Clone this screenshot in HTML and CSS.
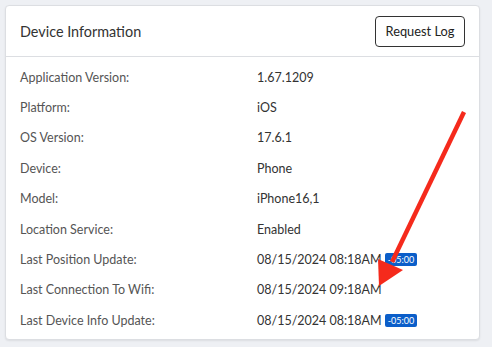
FILE: index.html
```html
<!DOCTYPE html>
<html lang="en">
  <head>
    <meta charset="UTF-8">
    <title>Device Information</title>
    <link rel="stylesheet" href="styles.css">
  </head>
  <body>
    <section class="panel">
      <header class="panel-head">
        <h2>Device Information</h2>
        <button class="btn">Request Log</button>
      </header>
      <div class="panel-body">
        <div class="row"><span class="label">Application Version:</span><span class="value">1.67.1209</span></div>
        <div class="row"><span class="label">Platform:</span><span class="value">iOS</span></div>
        <div class="row"><span class="label">OS Version:</span><span class="value">17.6.1</span></div>
        <div class="row"><span class="label">Device:</span><span class="value">Phone</span></div>
        <div class="row"><span class="label">Model:</span><span class="value">iPhone16,1</span></div>
        <div class="row"><span class="label">Location Service:</span><span class="value">Enabled</span></div>
        <div class="row"><span class="label">Last Position Update:</span><span class="value">08/15/2024 08:18AM <span class="tz">-05:00</span></span></div>
        <div class="row"><span class="label">Last Connection To Wifi:</span><span class="value">08/15/2024 09:18AM</span></div>
        <div class="row"><span class="label">Last Device Info Update:</span><span class="value">08/15/2024 08:18AM <span class="tz">-05:00</span></span></div>
      </div>
    </section>
    <!-- annotation arrow drawn over the screenshot -->
    <svg class="arrow" width="492" height="347" viewBox="0 0 492 347">
      <line x1="464" y1="112" x2="392" y2="262" stroke="#f52a1c" stroke-width="4.5"/>
      <polygon points="379,286 378,259 403,270" fill="#f52a1c"/>
    </svg>
  </body>
</html>
```

FILE: styles.css
```css
body {
  margin: 0;
  padding: 5px 12px 7px 5px;
  background: #eef0f4;
  font-family: Lato, "Open Sans", sans-serif;
  position: relative;
}

.panel {
  background: #fff;
  border: 1px solid #dcdee2;
  border-radius: 4px;
  box-shadow: 0 1px 2px rgba(0, 0, 0, 0.08);
  height: 335px;
  box-sizing: border-box;
}

.panel-head {
  display: flex;
  align-items: center;
  justify-content: space-between;
  height: 50px;
  padding: 0 14px;
  border-bottom: 1px solid #dcdee2;
}

.panel-head h2 {
  margin: 0;
  font-size: 14.4px;
  font-weight: normal;
  color: #333;
}

.btn {
  width: 90px;
  height: 31px;
  background: #fff;
  border: 1px solid #333;
  border-radius: 4px;
  font-family: Lato, sans-serif;
  font-size: 12.8px;
  color: #222;
  padding: 0;
}

.panel-body {
  padding: 5px 14px 0;
}

.row {
  display: flex;
  align-items: center;
  height: 30.4px;
  font-size: 12.5px;
}

.label {
  width: 237px;
  color: #555;
}

.value {
  color: #333;
  display: flex;
  align-items: center;
  gap: 3px;
}

.tz {
  display: inline-block;
  background: #0b5ec9;
  color: #fff;
  font-size: 9px;
  line-height: 13px;
  padding: 0 3px;
  border-radius: 2px;
}

.arrow {
  position: absolute;
  left: 0;
  top: 0;
}
```
